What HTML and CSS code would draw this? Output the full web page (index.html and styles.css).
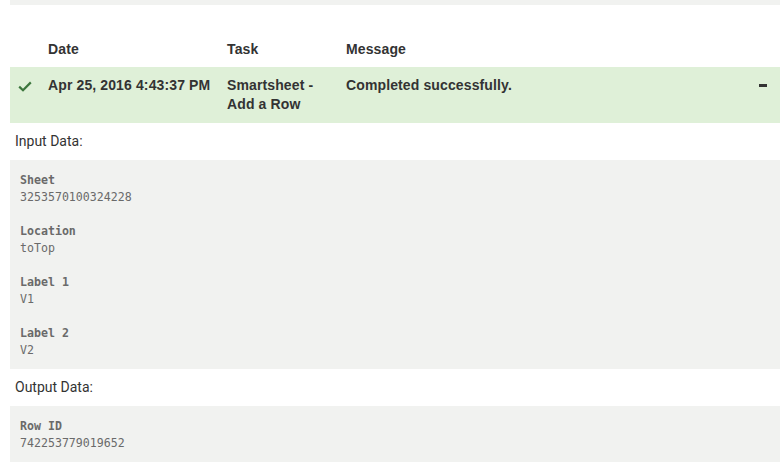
FILE: index.html
```html
<!DOCTYPE html>
<html>
<head>
<meta charset="utf-8">
<link rel="stylesheet" href="styles.css">
</head>
<body>
<div class="page">
  <div class="topbar"></div>
  <div class="grid head">
    <div class="cell"></div>
    <div class="cell">Date</div>
    <div class="cell">Task</div>
    <div class="cell">Message</div>
    <div class="cell"></div>
  </div>
  <div class="grid row success">
    <div class="cell icon">
      <svg width="14" height="11" viewBox="0 0 14 11"><path d="M1.2 5.6 L5 9.2 L12.8 1.4" fill="none" stroke="#3c763d" stroke-width="2.2"/></svg>
    </div>
    <div class="cell nowrap">Apr 25, 2016 4:43:37 PM</div>
    <div class="cell">Smartsheet -<br>Add a Row</div>
    <div class="cell">Completed successfully.</div>
    <div class="cell toggle"><span class="minus"></span></div>
  </div>
  <div class="section-label">Input Data:</div>
  <div class="databox">
    <div class="field"><div class="key">Sheet</div><div class="val">3253570100324228</div></div>
    <div class="field"><div class="key">Location</div><div class="val">toTop</div></div>
    <div class="field"><div class="key">Label 1</div><div class="val">V1</div></div>
    <div class="field"><div class="key">Label 2</div><div class="val">V2</div></div>
  </div>
  <div class="section-label">Output Data:</div>
  <div class="databox">
    <div class="field"><div class="key">Row ID</div><div class="val">742253779019652</div></div>
  </div>
</div>
</body>
</html>
```
FILE: styles.css
```css
html, body {
  margin: 0;
  padding: 0;
  background: #fff;
}
.page {
  margin: 0 4px 0 10px;
  width: 770px;
}
.topbar {
  height: 5px;
  background: #f1f2f0;
  margin-bottom: 26px;
}
.grid {
  display: grid;
  grid-template-columns: 30px 179px 119px 1fr 30px;
  font-family: "Liberation Sans", Arial, sans-serif;
  font-weight: bold;
  font-size: 14px;
  line-height: 19px;
  letter-spacing: 0.12px;
  color: #333;
}
.cell {
  padding: 8px;
  min-width: 0;
}
.nowrap {
  white-space: nowrap;
}
.head .cell {
  padding: 9px 8px 8px;
}
.row .cell {
  padding: 9px 8px 9px;
}
.success {
  background: #dff0d8;
}
.row .icon {
  padding: 11px 0 0 8px;
}
.row .toggle {
  display: flex;
  justify-content: flex-end;
  padding-right: 13px;
  padding-top: 17px;
}
.minus {
  display: block;
  width: 8px;
  height: 3px;
  background: #333;
}
.section-label {
  font-family: Roboto, "Open Sans", sans-serif;
  font-size: 14px;
  line-height: 17px;
  color: #333;
  padding: 10px 5px 10px 5px;
}
.databox {
  background: #f1f2f0;
  padding: 12px 10px 10px;
  font-family: "DejaVu Sans Mono", monospace;
  font-size: 11.6px;
  line-height: 17px;
  color: #6a6a6a;
}
.field + .field {
  margin-top: 17px;
}
.key {
  font-weight: bold;
}
```
